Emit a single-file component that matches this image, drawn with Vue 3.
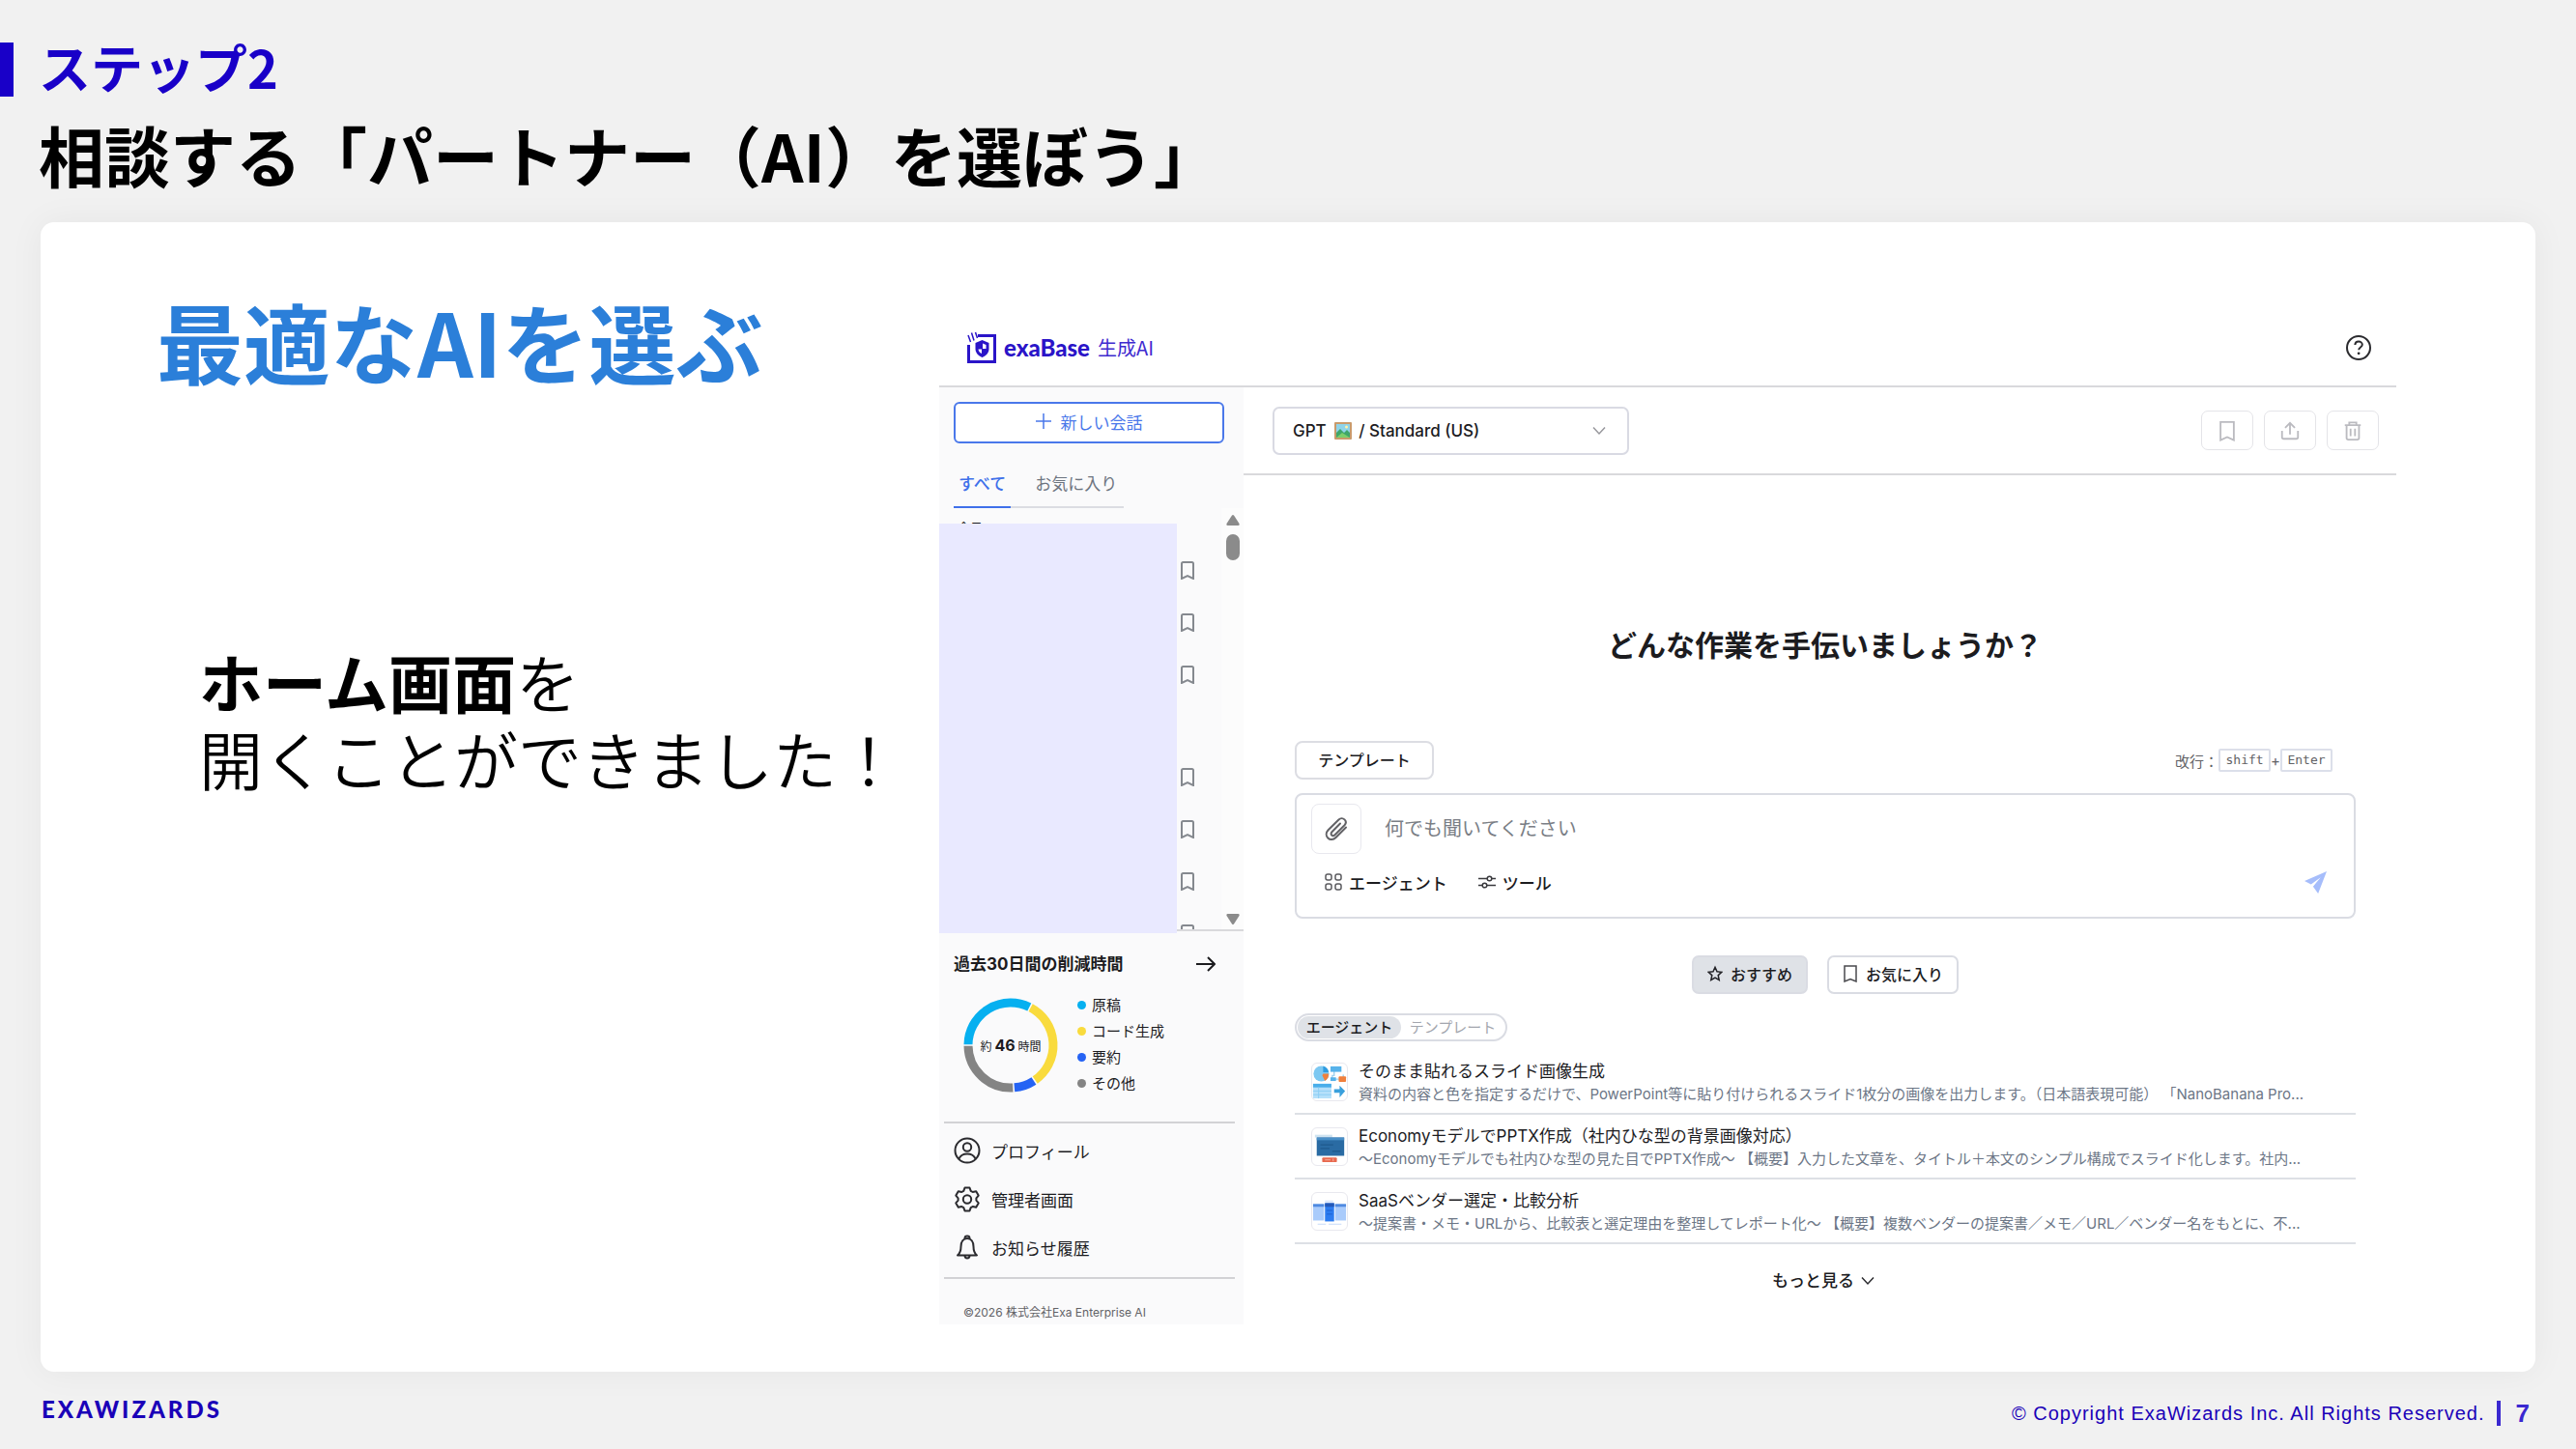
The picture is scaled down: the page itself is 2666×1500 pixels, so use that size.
<script setup>
import { ref } from 'vue'

const prompt = ref('')
const model = ref('gpt')

const groups = [
  { label: '今日', rows: 3 },
  { label: '', rows: 4 },
]

const legend = [
  { label: '原稿', color: '#06b0f0' },
  { label: 'コード生成', color: '#f9db3d' },
  { label: '要約', color: '#2563f4' },
  { label: 'その他', color: '#848484' },
]

// share of the ring in degrees, clockwise from twelve o'clock
const arcs = [
  { color: '#06b0f0', from: 271, to: 386 },
  { color: '#f9db3d', from: 28, to: 145 },
  { color: '#2563f4', from: 147, to: 175 },
  { color: '#848484', from: 177, to: 269 },
]

function arcPath({ from, to }) {
  const point = (deg) => {
    const a = ((deg - 90) * Math.PI) / 180
    return `${(50 + 44 * Math.cos(a)).toFixed(2)} ${(50 + 44 * Math.sin(a)).toFixed(2)}`
  }
  return `M${point(from)}A44 44 0 ${to - from > 180 ? 1 : 0} 1 ${point(to)}`
}

const agents = [
  {
    kind: 'slides',
    title: 'そのまま貼れるスライド画像生成',
    text: '資料の内容と色を指定するだけで、PowerPoint等に貼り付けられるスライド1枚分の画像を出力します。（日本語表現可能） 「NanoBanana Pro...',
  },
  {
    kind: 'deck',
    title: 'EconomyモデルでPPTX作成（社内ひな型の背景画像対応）',
    text: '～Economyモデルでも社内ひな型の見た目でPPTX作成～ 【概要】入力した文章を、タイトル＋本文のシンプル構成でスライド化します。社内...',
  },
  {
    kind: 'compare',
    title: 'SaaSベンダー選定・比較分析',
    text: '～提案書・メモ・URLから、比較表と選定理由を整理してレポート化～ 【概要】複数ベンダーの提案書／メモ／URL／ベンダー名をもとに、不...',
  },
]
</script>

<template>
  <div class="slide">
    <header class="heading">
      <p class="step">ステップ2</p>
      <h1>相談する「パートナー（AI）を選ぼう」</h1>
    </header>

    <main class="card">
      <section class="lead">
        <h2>最適なAIを選ぶ</h2>
        <p><strong>ホーム画面</strong>を<br />開くことができました！</p>
      </section>

      <section class="app">
        <div class="app-head">
          <div class="brand">
            <svg class="brand-mark" viewBox="0 0 30 34" fill="none" stroke="#2a14c8">
              <path d="M11 4.500H28.500V31.500H1.500V14" stroke-width="3" />
              <path d="M1 4l2.500 7M4.500 1.500l2.500 8M8.500 1l2 6" stroke-width="1.500" />
              <path d="M15.500 9l7 3v6c0 4.500-3 7-7 9-4-2-7-4.500-7-9v-6z" fill="#2a14c8" stroke="none" />
              <path d="M16 12.500l3.500 1.500v4H16zM11.500 18.500H15v4.500c-2-1-3.300-2.500-3.500-4.500z" fill="#fff" stroke="none" />
            </svg>
            <span class="brand-name">exaBase</span>
            <span class="brand-sub">生成AI</span>
          </div>
          <button class="help" aria-label="ヘルプ">
            <svg viewBox="0 0 26 26" fill="none" stroke="#2b2b2f" stroke-width="2">
              <circle cx="13" cy="13" r="12" />
              <path d="M9.300 10c.2-2.200 1.700-3.400 3.700-3.400s3.800 1.300 3.800 3.200c0 2.700-3.600 2.800-3.600 5.400" />
              <circle cx="13.100" cy="18.800" r="1.400" fill="#2b2b2f" stroke="none" />
            </svg>
          </button>
        </div>

        <div class="app-body">
          <aside class="side">
            <button class="new-chat">
              <svg viewBox="0 0 16 16" stroke="#4a78ea" stroke-width="1.500"><path d="M8 0v16M0 8h16" /></svg>
              新しい会話
            </button>
            <nav class="tabs">
              <a href="#all" class="on">すべて</a>
              <a href="#fav">お気に入り</a>
            </nav>

            <div class="history">
              <div class="scroll">
                <template v-for="(group, g) in groups" :key="g">
                  <div class="group" :class="{ later: g > 0 }">{{ group.label }}</div>
                  <div v-for="n in group.rows" :key="n" class="entry">
                    <svg viewBox="0 0 14 19" fill="none" stroke="#85898f" stroke-width="2">
                      <path d="M1 2.500Q1 1 2.500 1h9Q13 1 13 2.500V18L7 15 1 18z" />
                    </svg>
                  </div>
                </template>
              </div>
              <div class="bar">
                <svg viewBox="0 0 14 11" fill="#8b8b8b"><path d="M6 .5Q7-.5 8 .5L13.500 9Q14 11 12.500 11h-11Q0 11 .5 9z" /></svg>
                <i class="thumb"></i>
                <svg class="down" viewBox="0 0 14 11" fill="#8b8b8b"><path d="M6 10.500Q7 11.500 8 10.500L13.500 2Q14 0 12.500 0h-11Q0 0 .5 2z" /></svg>
              </div>
              <div class="mask"></div>
            </div>

            <section class="saved">
              <div class="saved-head">
                <h3>過去30日間の削減時間</h3>
                <svg viewBox="0 0 20 16" fill="none" stroke="#1c1c1f" stroke-width="2"><path d="M0 8h19M12 1l7 7-7 7" /></svg>
              </div>
              <div class="saved-body">
                <div class="ring">
                  <svg viewBox="0 0 100 100" fill="none" stroke-width="9">
                    <path v-for="arc in arcs" :key="arc.color" :d="arcPath(arc)" :stroke="arc.color" />
                  </svg>
                  <p>約<b>46</b>時間</p>
                </div>
                <ul class="legend">
                  <li v-for="item in legend" :key="item.label">
                    <i :style="{ background: item.color }"></i>{{ item.label }}
                  </li>
                </ul>
              </div>
            </section>

            <nav class="menu">
              <a href="#profile">
                <svg viewBox="0 0 28 28" fill="none" stroke="#2b2b2f" stroke-width="2">
                  <circle cx="14" cy="14" r="12.500" /><circle cx="14" cy="10.500" r="4.200" />
                  <path d="M5.500 22.500c1.500-3.500 4.700-5 8.500-5s7 1.500 8.500 5" />
                </svg>
                プロフィール
              </a>
              <a href="#admin">
                <svg viewBox="0 0 28 28" fill="none" stroke="#2b2b2f" stroke-width="2" stroke-linejoin="round">
                  <path d="M11.500 2.500h5l1.200 3.300 2 1.200 3.500-.7 2.500 4.300-2.300 2.700v2.400l2.300 2.700-2.500 4.300-3.500-.7-2 1.200-1.200 3.300h-5l-1.200-3.300-2-1.200-3.500.7-2.500-4.300 2.300-2.700v-2.400l-2.300-2.700 2.500-4.300 3.500.7 2-1.200z" />
                  <circle cx="14" cy="14.500" r="4.200" />
                </svg>
                管理者画面
              </a>
              <a href="#news">
                <svg viewBox="0 0 28 28" fill="none" stroke="#2b2b2f" stroke-width="2" stroke-linejoin="round">
                  <path d="M4 22.500c2.500-2 3.500-5 3.500-9 0-5 2.500-8.500 6.500-8.500s6.500 3.500 6.500 8.500c0 4 1 7 3.500 9z" />
                  <path d="M11.500 5c0-3.300 5-3.300 5 0M11.500 22.500c0 4 5 4 5 0" />
                </svg>
                お知らせ履歴
              </a>
            </nav>
            <small>©2026 株式会社Exa Enterprise AI</small>
          </aside>

          <div class="main">
            <div class="toolbar">
              <div class="picker">
                <select v-model="model" aria-label="モデル">
                  <option value="gpt">GPT &emsp;&nbsp;&thinsp; / Standard (US)</option>
                </select>
                <svg class="picture" viewBox="0 0 18 18">
                  <rect width="18" height="18" rx="1" fill="#c99a6b" />
                  <rect x="2" y="2" width="14" height="14" fill="#8fd4ea" />
                  <path d="M2 11l4-4 4 4 3-3 3 3v5H2z" fill="#3fa66a" />
                  <path d="M2 16l6-5 8 5z" fill="#7ccf6b" />
                  <circle cx="12.500" cy="5" r="1.500" fill="#fff3a8" />
                </svg>
                <svg class="caret" viewBox="0 0 14 10" fill="none" stroke="#97979c" stroke-width="1.500"><path d="M1 1.500l6 6.500 6-6.500" /></svg>
              </div>
              <div class="actions">
                <button aria-label="ブックマーク">
                  <svg viewBox="0 0 24 24"><path d="M4.500 2h15v20.500L12 19l-7.500 3.500z" /></svg>
                </button>
                <button aria-label="共有">
                  <svg viewBox="0 0 24 24"><path d="M3 12v7q0 2 2 2h14q2 0 2-2v-7M12 16V3M6.500 8.500L12 3l5.500 5.500" /></svg>
                </button>
                <button aria-label="削除">
                  <svg viewBox="0 0 24 24"><path d="M3 5.500h18M8 5V2.500h8V5M5 5.500V20q0 2 2 2h10q2 0 2-2V5.500M9.500 9.500v8.500M14.500 9.500v8.500" /></svg>
                </button>
              </div>
            </div>

            <div class="content">
              <h2 class="ask">どんな作業を手伝いましょうか？</h2>

              <div class="above">
                <button class="template">テンプレート</button>
                <p class="hint">改行：<kbd>shift</kbd>+<kbd>Enter</kbd></p>
              </div>

              <form class="composer" @submit.prevent>
                <div class="line">
                  <button type="button" class="attach" aria-label="ファイルを添付">
                    <svg viewBox="0 0 26 26" fill="none" stroke="#626266" stroke-width="2" stroke-linecap="round">
                      <path d="M23 11.500L12.500 22c-2.700 2.700-6 2.700-8.200.5s-2.200-5.500.3-8.200L15.500 3.500c1.800-1.800 4.300-1.800 6-.1s1.700 4 0 5.800L11.500 19.300c-1.100 1.100-2.500 1-3.300.2s-.9-2.200.2-3.300L17 7.500" />
                    </svg>
                  </button>
                  <input v-model="prompt" type="text" aria-label="メッセージ" placeholder="何でも聞いてください" />
                </div>
                <div class="line tools">
                  <button type="button">
                    <svg viewBox="0 0 18 18" fill="none" stroke="#5a5a5e" stroke-width="1.500">
                      <rect x="1" y="1" width="6" height="6" rx="2" /><rect x="11" y="1" width="6" height="6" rx="2" />
                      <rect x="1" y="11" width="6" height="6" rx="2" /><rect x="11" y="11" width="6" height="6" rx="2" />
                    </svg>
                    エージェント
                  </button>
                  <button type="button">
                    <svg viewBox="0 0 18 18" fill="none" stroke="#3a3a3e" stroke-width="1.500">
                      <path d="M0 5.500h9M14 5.500h4M0 12.500h4M9 12.500h9" /><circle cx="11.500" cy="5.500" r="2.300" /><circle cx="6.500" cy="12.500" r="2.300" />
                    </svg>
                    ツール
                  </button>
                  <button class="send" aria-label="送信">
                    <svg viewBox="0 0 22 22" fill="#a6bdfb"><path d="M22 0L0 9.500l6.500 3.500L16 6l-7.500 9 5 7z" /></svg>
                  </button>
                </div>
              </form>

              <div class="filters">
                <button class="on">
                  <svg viewBox="0 0 16 16" fill="none" stroke="#222226" stroke-width="1.500"><path d="M8 1.300l2 4.500 4.800.5-3.600 3.300 1 4.900L8 12l-4.200 2.500 1-4.900L1.200 6.300 6 5.800z" /></svg>
                  おすすめ
                </button>
                <button>
                  <svg viewBox="0 0 16 18" fill="none" stroke="#4a4a4e" stroke-width="1.500"><path d="M2 1h12v16l-6-2.500L2 17z" /></svg>
                  お気に入り
                </button>
              </div>

              <div class="toggle">
                <button class="on">エージェント</button>
                <button>テンプレート</button>
              </div>

              <ul class="agents">
                <li v-for="agent in agents" :key="agent.kind">
                  <svg v-if="agent.kind === 'slides'" class="thumbnail" viewBox="0 0 38 38">
                    <circle cx="10" cy="10" r="8.500" fill="#7cc8f2" />
                    <path d="M12 1.500a8.500 8.500 0 0 1 6 7h-6z" fill="#2f9be0" />
                    <path d="M12 10h6a9 9 0 0 1-4 8l-3-6z" fill="#f0803c" />
                    <path d="M24 7v5h-2v4h12v-5" fill="none" stroke="#9fd3f0" stroke-width="1.500" />
                    <rect x="20" y="2" width="12" height="6" fill="#57b2ea" />
                    <rect x="20" y="14" width="6" height="4" fill="#57b2ea" />
                    <rect x="29" y="13" width="8" height="6" rx="1" fill="#f0803c" />
                    <rect x="1" y="21" width="20" height="16" fill="#b5e0fa" />
                    <rect x="1" y="21" width="20" height="4" fill="#4aaeea" />
                    <path d="M1 29h20M1 33h20M7 25v12" stroke="#8ccdf3" />
                    <path d="M24 27h6v-4l6 6-6 7v-5h-6z" fill="#3aa0dc" />
                  </svg>
                  <svg v-else-if="agent.kind === 'deck'" class="thumbnail" viewBox="0 0 38 38">
                    <rect x="3" y="6" width="19" height="3" fill="#cfe3f1" />
                    <rect x="5" y="9" width="30" height="20" fill="#2a6ba3" />
                    <rect x="5" y="9" width="30" height="3" fill="#4a90c8" />
                    <path d="M9 17h14M9 21h10M22 24h9" stroke="#1f5a8e" stroke-width="1.500" />
                    <rect x="11" y="31" width="16" height="5" rx="1" fill="#e8694f" />
                    <path d="M14 33.500h6M23 32v3" stroke="#f7b3a4" />
                  </svg>
                  <svg v-else class="thumbnail" viewBox="0 0 38 38">
                    <path d="M14 8h9" stroke="#d5e4fb" stroke-width="2" />
                    <rect x="1" y="11" width="12" height="18" fill="#a9cbfb" />
                    <rect x="25" y="11" width="12" height="18" fill="#a9cbfb" />
                    <rect x="1" y="11" width="12" height="3" fill="#4f8ae0" />
                    <rect x="25" y="11" width="12" height="3" fill="#4f8ae0" />
                    <rect x="14" y="10" width="10" height="20" fill="#2c7cf0" />
                    <rect x="14" y="10" width="10" height="4" fill="#2358b8" />
                    <path d="M16 18h6M16 22h6" stroke="#1d5fcc" />
                    <path d="M6 33h9M18 33h14" stroke="#c3d8f8" />
                  </svg>
                  <div>
                    <h4>{{ agent.title }}</h4>
                    <p>{{ agent.text }}</p>
                  </div>
                </li>
              </ul>

              <button class="more">
                もっと見る
                <svg viewBox="0 0 14 10" fill="none" stroke="#2b2b2f" stroke-width="1.500"><path d="M1 1.500l6 6.500 6-6.500" /></svg>
              </button>
            </div>
          </div>
        </div>
      </section>
    </main>

    <footer class="foot">
      <span class="company">EXAWIZARDS</span>
      <span class="rights">© Copyright ExaWizards Inc. All Rights Reserved.</span>
      <b class="page">7</b>
    </footer>
  </div>
</template>

<style>
body {
  margin: 0;
  background: #f1f1f1;
}
</style>

<style scoped>
* {
  box-sizing: border-box;
}

h1, h2, h3, h4, p, ul {
  margin: 0;
  padding: 0;
}

ul {
  list-style: none;
}

a {
  color: inherit;
  text-decoration: none;
}

button, input, select {
  margin: 0;
  padding: 0;
  border: 0;
  background: none;
  color: inherit;
  font: inherit;
}

button {
  display: flex;
  align-items: center;
  justify-content: center;
}

svg {
  display: block;
  flex: none;
}

.slide {
  display: flex;
  flex-direction: column;
  min-height: 100vh;
  padding-top: 44px;
  background: #f1f1f1;
  color: #000;
  font-family: "Noto Sans CJK JP", sans-serif;
}

.step {
  height: 56px;
  padding-left: 26px;
  border-left: 14px solid #1900c8;
  color: #1900c8;
  font-size: 54px;
  font-weight: 700;
  line-height: 50px;
}

h1 {
  margin: 20px 40px 30px;
  font-size: 68px;
  line-height: 80px;
}

.card {
  display: flex;
  flex: 1;
  align-items: flex-start;
  margin: 0 42px;
  padding: 90px 144px 48px 0;
  border-radius: 14px;
  background: #fff;
  box-shadow: 0 0 36px rgba(0, 0, 0, .05);
}

.lead {
  flex: 0 0 930px;
}

.lead h2 {
  padding-left: 120px;
  color: #2b7fd9;
  font-size: 90px;
  line-height: 64px;
}

.lead p {
  margin-top: 285px;
  padding-left: 164px;
  font-family: Inter, "Noto Sans CJK JP", sans-serif;
  font-size: 66px;
  font-weight: 350;
  line-height: 80px;
  white-space: nowrap;
}

.lead strong {
  font-weight: 700;
}

.app {
  flex: 1;
  min-width: 0;
  color: #1c1c1f;
  font-family: Inter, "Noto Sans CJK JP", sans-serif;
  font-size: 17px;
}

.app-head {
  display: flex;
  align-items: center;
  justify-content: space-between;
  height: 81px;
  padding: 0 26px 0 29px;
  border-bottom: 2px solid #d9d9dc;
}

.brand {
  display: flex;
  align-items: center;
}

.brand-mark {
  width: 30px;
  height: 34px;
  margin-right: 8px;
}

.brand-name {
  margin-right: 8px;
  color: #2a14c8;
  font-family: Lato, sans-serif;
  font-size: 24px;
  font-weight: 900;
}

.brand-sub {
  color: #3f2ccf;
  font-family: "Noto Sans CJK JP", sans-serif;
  font-size: 20px;
}

.help svg {
  width: 26px;
  height: 26px;
}

.app-body {
  display: flex;
}

.side {
  display: flex;
  flex: 0 0 315px;
  flex-direction: column;
  background: #fafafb;
}

.new-chat {
  gap: 10px;
  height: 43px;
  margin: 15px 20px 0 15px;
  padding-bottom: 3px;
  border: 2px solid #4a78ea;
  border-radius: 6px;
  background: #fff;
  color: #4a78ea;
}

.new-chat svg {
  width: 16px;
  height: 16px;
}

.tabs {
  display: flex;
  width: 176px;
  height: 50px;
  margin: 17px 0 0 15px;
  border-bottom: 2px solid #dcdde2;
  color: #6d7480;
  line-height: 50px;
}

.tabs a {
  height: 50px;
  padding: 0 8px 0 25px;
  white-space: nowrap;
}

.tabs .on {
  padding: 0 5px;
  border-bottom: 2px solid #3f70ea;
  color: #3f70ea;
  font-weight: 500;
}

.history {
  position: relative;
  display: flex;
  height: 438px;
  border-bottom: 2px solid #d9d9dc;
}

.scroll {
  flex: 1;
  overflow: hidden;
}

.group {
  height: 37px;
  padding: 11px 0 0 19px;
  font-size: 13px;
  line-height: 18px;
}

.later {
  height: 52px;
}

.entry {
  display: flex;
  align-items: center;
  justify-content: flex-end;
  height: 54px;
  padding-right: 28px;
}

.entry svg {
  width: 14px;
  height: 19px;
}

.bar {
  display: flex;
  flex: 0 0 23px;
  flex-direction: column;
  align-items: center;
  padding: 7px 0 5px;
  background: #fcfcfc;
}

.bar svg {
  width: 14px;
  height: 11px;
}

.bar .down {
  margin-top: auto;
}

.thumb {
  width: 14px;
  height: 27px;
  margin-top: 9px;
  border-radius: 7px;
  background: #8b8b8b;
}

/* covers the conversation titles */
.mask {
  position: absolute;
  top: 16px;
  bottom: -4px;
  left: 0;
  width: 246px;
  background: #e9e9ff;
}

.saved {
  margin: 0 9px 0 5px;
  padding: 20px 20px 0 10px;
  height: 199px;
  border-bottom: 2px solid #d2d2d5;
}

.saved-head {
  display: flex;
  align-items: center;
  justify-content: space-between;
  height: 28px;
}

h3 {
  font-size: 17px;
  line-height: 28px;
}

.saved-head svg {
  width: 20px;
  height: 16px;
}

.saved-body {
  display: flex;
  gap: 19px;
  margin: 15px 0 0 9px;
}

.ring {
  position: relative;
  width: 100px;
  height: 100px;
  margin-top: 5px;
}

.ring p {
  position: absolute;
  inset: 0;
  display: flex;
  align-items: center;
  justify-content: center;
  gap: 3px;
  font-size: 12px;
  white-space: nowrap;
}

.ring b {
  font-size: 16px;
}

.legend {
  font-size: 15px;
  line-height: 27px;
}

.legend li {
  display: flex;
  align-items: center;
  gap: 6px;
}

.legend i {
  width: 9px;
  height: 9px;
  border-radius: 50%;
}

.menu {
  margin: 0 9px 0 5px;
  padding: 3px 0 6px 10px;
  border-bottom: 2px solid #d2d2d5;
}

.menu a {
  display: flex;
  align-items: center;
  gap: 11px;
  height: 50px;
}

.menu svg {
  width: 28px;
  height: 28px;
}

small {
  padding: 25px 0 2px 25px;
  color: #626266;
  font-size: 12px;
  line-height: 20px;
}

.main {
  flex: 1;
  min-width: 0;
}

.toolbar {
  display: flex;
  align-items: center;
  justify-content: space-between;
  height: 91px;
  padding: 0 18px 0 30px;
  border-bottom: 2px solid #d9d9dc;
}

.picker {
  position: relative;
  width: 369px;
}

select {
  width: 100%;
  height: 50px;
  padding-left: 19px;
  border: 2px solid #d9dae3;
  border-radius: 7px;
  appearance: none;
  font-weight: 500;
}

.picture {
  position: absolute;
  top: 16px;
  left: 64px;
  width: 18px;
  height: 18px;
}

.caret {
  position: absolute;
  top: 20px;
  right: 24px;
  width: 14px;
  height: 10px;
}

.actions {
  display: flex;
  gap: 11px;
}

.actions button {
  width: 54px;
  height: 41px;
  border: 1px solid #e4e4e8;
  border-radius: 7px;
}

.actions svg {
  width: 22px;
  height: 22px;
  fill: none;
  stroke: #bbbbc0;
  stroke-width: 2;
}

.content {
  padding: 0 42px 0 53px;
}

.ask {
  margin-top: 156px;
  font-size: 30px;
  line-height: 40px;
  text-align: center;
}

.above {
  display: flex;
  align-items: center;
  justify-content: space-between;
  margin-top: 79px;
}

.template {
  width: 144px;
  height: 40px;
  padding-bottom: 2px;
  border: 2px solid #dcdde3;
  border-radius: 8px;
  font-size: 16px;
  font-weight: 500;
}

.hint {
  display: flex;
  align-items: center;
  padding-right: 24px;
  color: #626266;
  font-size: 15px;
}

kbd {
  width: 54px;
  border: 2px solid #dcdfea;
  border-radius: 2px;
  font-family: "DejaVu Sans Mono", monospace;
  font-size: 13px;
  line-height: 20px;
  text-align: center;
}

.composer {
  height: 130px;
  margin-top: 14px;
  padding: 9px 28px 0 15px;
  border: 2px solid #dadce3;
  border-radius: 8px;
}

.line {
  display: flex;
  align-items: center;
}

.attach {
  width: 52px;
  height: 52px;
  border: 1px solid #e8e8ee;
  border-radius: 8px;
}

.attach svg {
  width: 26px;
  height: 26px;
}

input {
  flex: 1;
  height: 40px;
  margin-left: 24px;
  outline: 0;
  font-size: 20px;
}

input::placeholder {
  color: #7a7e85;
  opacity: 1;
}

.tools {
  gap: 32px;
  height: 40px;
  margin-top: 9px;
  padding-left: 14px;
  font-weight: 500;
}

.tools button {
  gap: 7px;
}

.tools svg {
  width: 18px;
  height: 18px;
}

.tools .send {
  margin-left: auto;
}

.send svg {
  width: 23px;
  height: 23px;
}

.filters {
  display: flex;
  justify-content: center;
  gap: 20px;
  margin-top: 38px;
  font-size: 16px;
  font-weight: 500;
}

.filters button {
  gap: 8px;
  height: 40px;
  padding: 0 14px 3px;
  border: 2px solid #dadce3;
  border-radius: 7px;
}

.filters .on {
  background: #dfe2e7;
}

.filters svg {
  width: 16px;
  height: 18px;
}

.toggle {
  display: flex;
  width: 220px;
  height: 29px;
  margin-top: 20px;
  padding: 1px;
  border: 2px solid #dadce3;
  border-radius: 15px;
  color: #a3a6ae;
  font-size: 15px;
}

.toggle button {
  flex: 1;
  padding-bottom: 3px;
  white-space: nowrap;
}

.toggle .on {
  border-radius: 12px;
  background: #dfe2e7;
  color: #1c1c1f;
  font-weight: 500;
}

.agents li {
  display: flex;
  align-items: center;
  gap: 11px;
  height: 67px;
  padding-left: 17px;
  border-bottom: 2px solid #dde0e5;
}

.agents li:first-child {
  height: 76px;
  padding-top: 9px;
}

.thumbnail {
  width: 38px;
  height: 40px;
  border: 1px solid #e8e8ee;
  border-radius: 6px;
}

h4 {
  font-size: 17px;
  font-weight: 400;
  line-height: 26px;
}

.agents p {
  color: #6c7686;
  font-size: 15px;
  line-height: 22px;
  white-space: nowrap;
}

.more {
  gap: 7px;
  margin: 22px auto 0;
  padding-right: 4px;
  font-weight: 500;
  line-height: 32px;
}

.more svg {
  width: 14px;
  height: 10px;
}

.foot {
  display: flex;
  align-items: center;
  height: 80px;
  padding: 0 48px 0 43px;
  color: #1a00b8;
}

.company {
  margin-right: auto;
  padding-bottom: 4px;
  font-family: Lato, sans-serif;
  font-size: 24px;
  font-weight: 900;
  letter-spacing: 3px;
}

.rights {
  padding-top: 6px;
  font-family: "Liberation Sans", sans-serif;
  font-size: 20px;
  letter-spacing: 1px;
}

.page {
  margin: 6px 0 0 12px;
  padding-left: 16px;
  border-left: 4px solid #3a28d0;
  color: #3a28d0;
  font-family: "Liberation Sans", sans-serif;
  font-size: 26px;
  line-height: 26px;
}
</style>
